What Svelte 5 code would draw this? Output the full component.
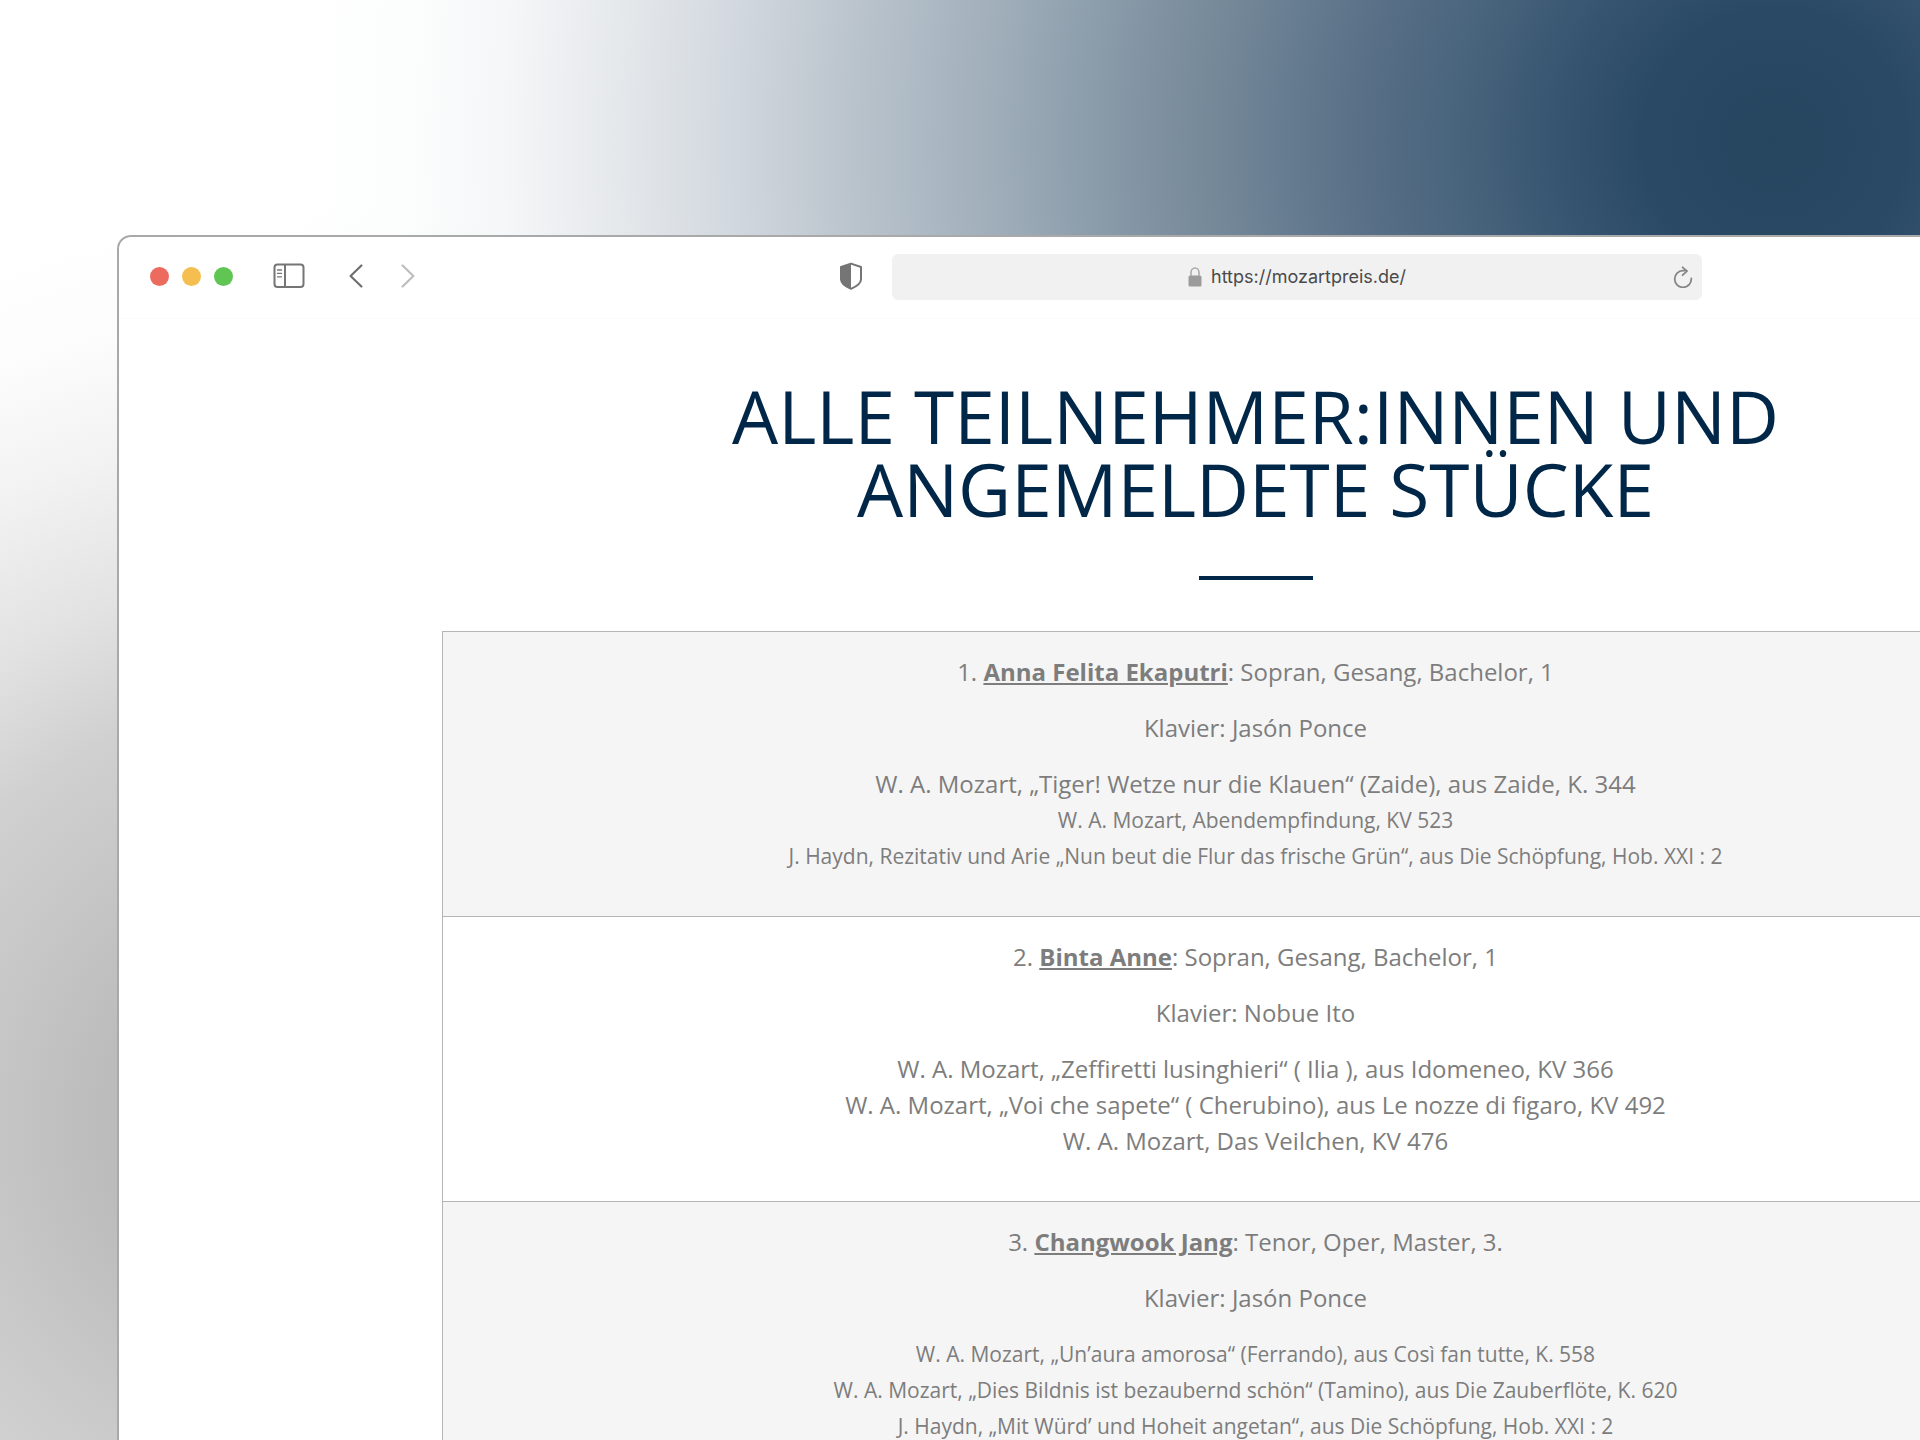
<script>
  const entries = [
    {
      name: 'Anna Felita Ekaputri',
      info: 'Sopran, Gesang, Bachelor, 1',
      piano: 'Jasón Ponce',
      pieces: [
        { text: 'W. A. Mozart, „Tiger! Wetze nur die Klauen“ (Zaide), aus Zaide, K. 344' },
        { text: 'W. A. Mozart, Abendempfindung, KV 523', small: true },
        { text: 'J. Haydn, Rezitativ und Arie „Nun beut die Flur das frische Grün“, aus Die Schöpfung, Hob. XXI : 2', small: true }
      ]
    },
    {
      name: 'Binta Anne',
      info: 'Sopran, Gesang, Bachelor, 1',
      piano: 'Nobue Ito',
      pieces: [
        { text: 'W. A. Mozart, „Zeffiretti lusinghieri“ ( Ilia ), aus Idomeneo, KV 366' },
        { text: 'W. A. Mozart, „Voi che sapete“ ( Cherubino), aus Le nozze di figaro, KV 492' },
        { text: 'W. A. Mozart, Das Veilchen, KV 476' }
      ]
    },
    {
      name: 'Changwook Jang',
      info: 'Tenor, Oper, Master, 3.',
      piano: 'Jasón Ponce',
      pieces: [
        { text: 'W. A. Mozart, „Un’aura amorosa“ (Ferrando), aus Così fan tutte, K. 558', small: true },
        { text: 'W. A. Mozart, „Dies Bildnis ist bezaubernd schön“ (Tamino), aus Die Zauberflöte, K. 620', small: true },
        { text: 'J. Haydn, „Mit Würd’ und Hoheit angetan“, aus Die Schöpfung, Hob. XXI : 2', small: true }
      ]
    }
  ];
  let url = $state('https://mozartpreis.de/');
</script>

<div class="desktop">
  <div class="window">
    <header class="toolbar">
      <div class="lights">
        <button class="light red" aria-label="Schließen"></button>
        <button class="light yellow" aria-label="Minimieren"></button>
        <button class="light green" aria-label="Vergrößern"></button>
      </div>
      <button class="tool sidebar" aria-label="Seitenleiste">
        <svg width="32" height="26" viewBox="0 0 32 26" fill="none" stroke="#757575" stroke-width="2">
          <rect x="1.5" y="1.5" width="29" height="22.5" rx="3" />
          <path d="M12 1.5V24" />
          <path d="M4.5 7h4M4.5 10.4h4M4.5 13.8h4" stroke-width="1.3" stroke-linecap="round" />
        </svg>
      </button>
      <button class="tool back" aria-label="Zurück">
        <svg width="14" height="24" viewBox="0 0 14 24" fill="none" stroke="#6f6f6f" stroke-width="2.2" stroke-linecap="round" stroke-linejoin="round">
          <path d="M12.4 1.5 1.6 12l10.8 10.5" />
        </svg>
      </button>
      <button class="tool forward" aria-label="Vorwärts">
        <svg width="14" height="24" viewBox="0 0 14 24" fill="none" stroke="#bdbdbd" stroke-width="2.2" stroke-linecap="round" stroke-linejoin="round">
          <path d="M1.6 1.5 12.4 12 1.6 22.5" />
        </svg>
      </button>
      <button class="tool shield" aria-label="Datenschutzbericht">
        <svg width="24" height="28" viewBox="0 0 24 28">
          <path d="M12 1.6 22 5v12.2c0 4-4.5 7.200-10 9.600C6.500 24.400 2 21.200 2 17.200V5z" fill="none" stroke="#757575" stroke-width="2" stroke-linejoin="round" />
          <path d="M12 1.600V26.800C6.500 24.400 2 21.200 2 17.200V5z" fill="#757575" />
        </svg>
      </button>
      <div class="address">
        <svg width="14" height="20" viewBox="0 0 14 20">
          <rect x="0.5" y="8.5" width="13" height="11" rx="1.5" fill="#9b9b9b" />
          <path d="M3 9V5.500a4 4.500 0 0 1 8 0V9" fill="none" stroke="#ababab" stroke-width="1.6" />
        </svg>
        <input type="text" aria-label="Adresse" bind:value={url} />
        <button class="tool reload" aria-label="Neu laden">
          <svg width="20" height="22" viewBox="0 0 20 22" fill="none" stroke="#858585" stroke-width="1.8" stroke-linecap="round" stroke-linejoin="round">
            <path d="M18.300 12.500A8.300 8.300 0 1 1 10 4.700h3.500" />
            <path d="M9.600 1.300 14 5.200l-4.400 4" />
          </svg>
        </button>
      </div>
    </header>

    <main>
      <h1>ALLE TEILNEHMER:INNEN UND<br />ANGEMELDETE STÜCKE</h1>
      <hr />
      <div class="entries">
        {#each entries as entry, i}
          <section class="entry">
            <p>{i + 1}. <strong>{entry.name}</strong>: {entry.info}</p>
            <p>Klavier: {entry.piano}</p>
            <ul>
              {#each entry.pieces as piece}
                <li class:small={piece.small}>{piece.text}</li>
              {/each}
            </ul>
          </section>
        {/each}
      </div>
    </main>
  </div>
</div>

<style>
  :global(body) {
    margin: 0;
  }
  .desktop {
    box-sizing: border-box;
    height: 100vh;
    overflow: hidden;
    padding: 235px 0 0 117px;
    background:
      radial-gradient(circle at 300px 1125px, #b8b8b8 0, #bcbcbc 199px, #c8c8c8 330px, #d0d0d0 430px, #e2e2e2 550px, #f2f2f2 690px, #fcfcfc 810px, #ffffff 920px),
      radial-gradient(circle at 1775px 140px, #26455f 0, #2a4964 130px, #365470 215px, #46627b 305px, #5a7188 425px, #728697 550px, #8b9caa 685px, #a2b0bc 795px, #b8c2cb 915px, #d1d7de 1040px, #e6e9ec 1165px, #f5f7f8 1275px, #fcfdfd 1370px, #ffffff 1480px);
    background-blend-mode: multiply;
    font-family: 'Open Sans', 'Noto Sans', sans-serif;
  }
  .window {
    margin-right: -474px;
    border: 2px solid #a9a9a9;
    border-radius: 14px;
    background: #fff;
    overflow: hidden;
  }
  .toolbar {
    display: flex;
    align-items: center;
    height: 78px;
    padding: 0 690px 3px 31px;
    border-bottom: 1px solid #fafafa;
  }
  button {
    padding: 0;
    border: 0;
    background: none;
  }
  .lights {
    display: flex;
    gap: 13px;
  }
  .light {
    width: 19px;
    height: 19px;
    border-radius: 50%;
  }
  .red {
    background: #ed6a5e;
  }
  .yellow {
    background: #f5bf4f;
  }
  .green {
    background: #61c554;
  }
  .tool {
    display: flex;
    flex: none;
  }
  .sidebar {
    margin-left: 40px;
  }
  .back {
    margin-left: 44px;
  }
  .forward {
    margin-left: 38px;
  }
  .shield {
    margin-left: 424px;
  }
  .address {
    position: relative;
    display: flex;
    flex: 1;
    align-items: center;
    justify-content: center;
    gap: 9px;
    height: 46px;
    margin-top: 2px;
    margin-left: 29px;
    border-radius: 6px;
    background: #f1f1f1;
  }
  .address input {
    field-sizing: content;
    height: 30px;
    padding: 0;
    border: 0;
    outline: 0;
    background: none;
    color: #4a4a4a;
    font: 18px/30px Inter, Roboto, sans-serif;
  }
  .reload {
    position: absolute;
    right: 9px;
  }
  main {
    padding: 60px 323px 0;
    text-align: center;
  }
  h1 {
    margin: 0;
    color: #002648;
    font-size: 73px;
    font-weight: 400;
    line-height: 73px;
  }
  hr {
    width: 114px;
    height: 4px;
    margin: 51px auto;
    border: 0;
    background: #002648;
  }
  .entries {
    border: 1px solid #b5b5b5;
    border-bottom: 0;
    color: #7d7d7d;
    font-size: 24px;
    line-height: 36px;
  }
  .entry {
    padding: 22px 24px 42px;
    border-bottom: 1px solid #b5b5b5;
  }
  .entry:nth-child(odd) {
    background: #f5f5f5;
  }
  p {
    margin: 0 0 20px;
  }
  strong {
    font-weight: 700;
    text-decoration: underline;
  }
  ul {
    margin: 0;
    padding: 0;
    list-style: none;
  }
  .small {
    font-size: 21px;
  }
</style>
